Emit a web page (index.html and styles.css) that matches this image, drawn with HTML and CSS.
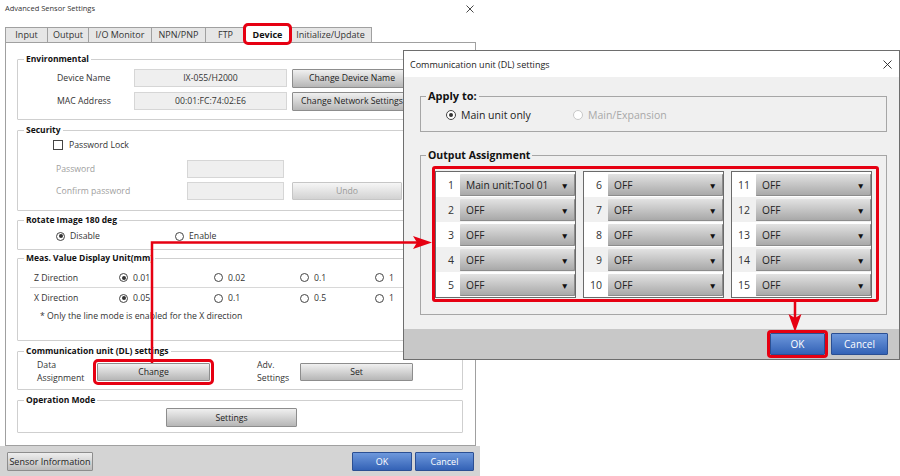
FILE: index.html
```html
<!DOCTYPE html>
<html lang="en">
<head>
  <meta charset="UTF-8">
  <title>Advanced Sensor Settings</title>
  <link rel="stylesheet" href="styles.css">
</head>
<body>
<div class="screen">

  <!-- Main window -->
  <div class="main">
    <div class="titlebar">
      <span>Advanced Sensor Settings</span>
      <svg class="close" width="8" height="8" viewBox="0 0 8 8"><path d="M0.5 0.5L7.5 7.5M7.5 0.5L0.5 7.5" stroke="#333" stroke-width="0.9"/></svg>
    </div>

    <div class="tabs">
      <div class="tab w-input">Input</div>
      <div class="tab w-output">Output</div>
      <div class="tab w-io">I/O Monitor</div>
      <div class="tab w-npn">NPN/PNP</div>
      <div class="tab w-ftp">FTP</div>
      <div class="tab w-device active hl">Device</div>
      <div class="tab w-init">Initialize/Update</div>
    </div>

    <div class="panel">
      <!-- Environmental -->
      <fieldset class="group">
        <legend>Environmental</legend>
        <div class="gbody env">
          <div class="row">
            <span class="lbl">Device Name</span>
            <span class="field">IX-055/H2000</span>
            <span class="btn wide">Change Device Name</span>
          </div>
          <div class="row">
            <span class="lbl">MAC Address</span>
            <span class="field">00:01:FC:74:02:E6</span>
            <span class="btn wide">Change Network Settings</span>
          </div>
        </div>
      </fieldset>

      <!-- Security -->
      <fieldset class="group sec-group">
        <legend>Security</legend>
        <div class="gbody sec">
          <div class="row check-row">
            <span class="check"></span>
            <span>Password Lock</span>
          </div>
          <div class="row pw-row">
            <span class="lbl dim">Password</span>
            <span class="field small"></span>
          </div>
          <div class="row pw-row">
            <span class="lbl dim">Confirm password</span>
            <span class="field small"></span>
            <span class="btn undo disabled">Undo</span>
          </div>
        </div>
      </fieldset>

      <!-- Rotate -->
      <fieldset class="group rot-group">
        <legend>Rotate Image 180 deg</legend>
        <div class="gbody rot">
          <div class="opt w119"><span class="radio on"></span>Disable</div>
          <div class="opt"><span class="radio"></span>Enable</div>
        </div>
      </fieldset>

      <!-- Meas. value -->
      <fieldset class="group meas-group">
        <legend>Meas. Value Display Unit(mm)</legend>
        <div class="gbody meas">
          <div class="mrow first">
            <span>Z Direction</span>
            <div class="opt"><span class="radio on"></span>0.01</div>
            <div class="opt"><span class="radio"></span>0.02</div>
            <div class="opt"><span class="radio"></span>0.1</div>
            <div class="opt"><span class="radio"></span>1</div>
          </div>
          <div class="mrow">
            <span>X Direction</span>
            <div class="opt"><span class="radio on"></span>0.05</div>
            <div class="opt"><span class="radio"></span>0.1</div>
            <div class="opt"><span class="radio"></span>0.5</div>
            <div class="opt"><span class="radio"></span>1</div>
          </div>
          <div class="note">* Only the line mode is enabled for the X direction</div>
        </div>
      </fieldset>

      <!-- Communication unit -->
      <fieldset class="group comm-group">
        <legend>Communication unit (DL) settings</legend>
        <div class="gbody comm">
          <span class="two-line">Data<br>Assignment</span>
          <span class="btn mid hl2">Change</span>
          <span class="two-line adv">Adv.<br>Settings</span>
          <span class="btn mid">Set</span>
        </div>
      </fieldset>

      <!-- Operation mode -->
      <fieldset class="group op-group">
        <legend>Operation Mode</legend>
        <div class="gbody op">
          <span class="btn settings">Settings</span>
        </div>
      </fieldset>
    </div>

    <div class="footer">
      <span class="btn info">Sensor Information</span>
      <div class="footer-right">
        <span class="btn blue ok-main">OK</span>
        <span class="btn blue cancel-main">Cancel</span>
      </div>
    </div>
  </div>

  <!-- Communication unit dialog -->
  <div class="dialog">
    <div class="dtitle">
      <span>Communication unit (DL) settings</span>
      <svg width="9" height="9" viewBox="0 0 9 9"><path d="M0.5 0.5L8.5 8.5M8.5 0.5L0.5 8.5" stroke="#222" stroke-width="0.9"/></svg>
    </div>
    <div class="dbody">
      <fieldset class="dgroup apply">
        <legend>Apply to:</legend>
        <div class="apply-row">
          <div class="opt big"><span class="radio on"></span>Main unit only</div>
          <div class="opt big dim"><span class="radio off"></span>Main/Expansion</div>
        </div>
      </fieldset>

      <fieldset class="dgroup output">
        <legend>Output Assignment</legend>
        <div class="assign">
          <div class="col">
            <div class="arow"><span class="num">1</span><span class="dd">Main unit:Tool 01<i>&#9660;</i></span></div>
            <div class="arow"><span class="num">2</span><span class="dd">OFF<i>&#9660;</i></span></div>
            <div class="arow"><span class="num">3</span><span class="dd">OFF<i>&#9660;</i></span></div>
            <div class="arow"><span class="num">4</span><span class="dd">OFF<i>&#9660;</i></span></div>
            <div class="arow"><span class="num">5</span><span class="dd">OFF<i>&#9660;</i></span></div>
          </div>
          <div class="col">
            <div class="arow"><span class="num">6</span><span class="dd">OFF<i>&#9660;</i></span></div>
            <div class="arow"><span class="num">7</span><span class="dd">OFF<i>&#9660;</i></span></div>
            <div class="arow"><span class="num">8</span><span class="dd">OFF<i>&#9660;</i></span></div>
            <div class="arow"><span class="num">9</span><span class="dd">OFF<i>&#9660;</i></span></div>
            <div class="arow"><span class="num">10</span><span class="dd">OFF<i>&#9660;</i></span></div>
          </div>
          <div class="col">
            <div class="arow"><span class="num">11</span><span class="dd">OFF<i>&#9660;</i></span></div>
            <div class="arow"><span class="num">12</span><span class="dd">OFF<i>&#9660;</i></span></div>
            <div class="arow"><span class="num">13</span><span class="dd">OFF<i>&#9660;</i></span></div>
            <div class="arow"><span class="num">14</span><span class="dd">OFF<i>&#9660;</i></span></div>
            <div class="arow"><span class="num">15</span><span class="dd">OFF<i>&#9660;</i></span></div>
          </div>
        </div>
      </fieldset>
    </div>
    <div class="dfooter">
      <span class="btn blue dbtn hl3">OK</span>
      <span class="btn blue dbtn cancel">Cancel</span>
    </div>
  </div>

  <!-- Red callout arrows -->
  <svg class="arrows" width="900" height="476" viewBox="0 0 900 476">
    <path d="M152 363 V242.5 H420" fill="none" stroke="#e60012" stroke-width="2.5"/>
    <polygon points="413,236 432,242.5 413,249 417,242.5" fill="#e60012"/>
    <path d="M795 302 V322" fill="none" stroke="#e60012" stroke-width="2.5"/>
    <polygon points="788.5,314 795,332 801.5,314 795,318" fill="#e60012"/>
  </svg>
</div>
</body>
</html>
```

FILE: styles.css
```css
/* Page */
body {
  margin: 0;
  background: #fff;
  font-family: "Open Sans", "Noto Sans", sans-serif;
  color: #222;
}

.screen {
  position: relative;
  width: 900px;
  height: 476px;
  overflow: hidden;
  background: #fff;
}

/* Main window */
.main {
  width: 480px;
  height: 476px;
  display: flex;
  flex-direction: column;
}

.titlebar {
  height: 26px;
  box-sizing: border-box;
  padding: 2px 6px 0 5px;
  display: flex;
  justify-content: space-between;
  font-size: 7.5px;
  line-height: 12px;
  color: #333;
}

.titlebar .close {
  margin-top: 3px;
}

.tabs {
  height: 16px;
  display: flex;
  align-items: flex-end;
  padding-left: 5px;
  position: relative;
  z-index: 2;
}

.tab {
  height: 15px;
  box-sizing: border-box;
  border: 1px solid #a0a0a0;
  border-bottom: none;
  margin-right: -1px;
  background: #e6e6e6;
  font-size: 9px;
  line-height: 14px;
  text-align: center;
  color: #333;
}

.tab.active {
  height: 18px;
  margin-bottom: -1px;
  background: #fff;
  font-weight: bold;
  line-height: 18px;
  color: #111;
  position: relative;
  z-index: 3;
}

.w-input { width: 43px; }
.w-output { width: 42px; }
.w-io { width: 64px; }
.w-npn { width: 55px; }
.w-ftp { width: 41px; }
.w-device { width: 45px; }
.w-init { width: 83px; }

/* Red annotation frames */
.hl {
  outline: 3px solid #e60012;
  outline-offset: -1px;
  border-radius: 3px;
}

.hl2 {
  outline: 3px solid #e60012;
  outline-offset: 1px;
  border-radius: 3px;
}

.hl3 {
  outline: 3px solid #e60012;
  outline-offset: 0;
  border-radius: 3px;
}

.panel {
  height: 404px;
  box-sizing: border-box;
  margin: 0 4px 0 5px;
  border: 1px solid #a0a0a0;
  padding: 10px 12px 0 11px;
  background: #fff;
}

/* Group boxes */
.group {
  margin: 0;
  padding: 0;
  min-width: 0;
  border: 1px solid #cfcfcf;
  border-radius: 1px;
}

.group legend {
  margin-left: 6px;
  padding: 0 2px;
  font-size: 8.5px;
  line-height: 12px;
  font-weight: bold;
  color: #111;
}

.sec-group { margin-top: 4px; }
.rot-group { margin-top: 3px; }
.meas-group { margin-top: 2px; }
.comm-group { margin-top: 4px; }
.op-group { margin-top: 4px; }

.gbody {
  font-size: 8.7px;
  color: #333;
}

.row {
  display: flex;
  align-items: center;
  height: 18px;
}

.env {
  padding: 4px 0 9px 39px;
  display: flex;
  flex-direction: column;
  gap: 5px;
}

.env .lbl {
  width: 77px;
}

.field {
  width: 153px;
  height: 18px;
  box-sizing: border-box;
  border: 1px solid #d6d6d6;
  background: #efefef;
  display: flex;
  align-items: center;
  justify-content: center;
  color: #333;
}

.field.small {
  width: 97px;
}

/* Buttons */
.btn {
  box-sizing: border-box;
  display: inline-flex;
  align-items: center;
  justify-content: center;
  border: 1px solid #8d8d8d;
  border-radius: 1px;
  background: linear-gradient(#f0f0f0, #b6b6b6);
  font-size: 8.7px;
  color: #222;
  white-space: nowrap;
}

.btn.wide {
  width: 120px;
  height: 19px;
  margin-left: 5px;
}

.btn.disabled {
  background: linear-gradient(#f6f6f6, #d2d2d2);
  border-color: #c6c6c6;
  color: #9a9a9a;
}

.btn.undo {
  width: 110px;
  height: 18px;
  margin-left: 8px;
}

.btn.blue {
  background: linear-gradient(#6e98dc, #3362b6);
  border-color: #2b4f93;
  color: #fff;
}

/* Security */
.sec {
  padding: 0 0 10px 0;
}

.check-row {
  padding-left: 35px;
  gap: 6px;
}

.check {
  width: 8px;
  height: 8px;
  border: 1px solid #444;
  background: #fff;
}

.pw-row {
  padding-left: 38px;
}

.pw-row + .pw-row {
  margin-top: 4px;
}

.check-row + .pw-row {
  margin-top: 6px;
}

.pw-row .lbl {
  width: 131px;
}

.dim {
  color: #a0a0a0;
}

/* Radio options */
.opt {
  display: flex;
  align-items: center;
  gap: 5px;
}

.radio {
  width: 7px;
  height: 7px;
  border: 1px solid #444;
  border-radius: 50%;
  background: #fff;
  position: relative;
  flex: none;
}

.radio.on::after {
  content: "";
  position: absolute;
  left: 1.5px;
  top: 1.5px;
  width: 4px;
  height: 4px;
  border-radius: 50%;
  background: #333;
}

.rot {
  display: flex;
  align-items: center;
  height: 20px;
  padding: 0 0 3px 38px;
}

.w119 {
  width: 119px;
}

/* Measurement unit */
.meas {
  padding: 4px 0 16px 0;
}

.mrow {
  display: grid;
  grid-template-columns: 85px 95px 86px 75px 1fr;
  align-items: center;
  height: 20px;
  margin: 0 10px 0 12px;
  padding-left: 4px;
}

.mrow.first {
  height: 19px;
  border-bottom: 1px solid #d8d8d8;
}

.note {
  height: 16px;
  line-height: 16px;
  padding-left: 22px;
}

/* Communication unit */
.comm {
  display: flex;
  align-items: center;
  padding: 2px 0 4px 19px;
}

.two-line {
  width: 60px;
  line-height: 13px;
}

.two-line.adv {
  width: 43px;
  margin-left: 47px;
}

.btn.mid {
  width: 113px;
  height: 18px;
}

.op {
  padding: 2px 0 5px 148px;
}

.btn.settings {
  width: 131px;
  height: 19px;
}

/* Footer of main window */
.footer {
  flex: 1;
  background: #d4d4d4;
  display: flex;
  align-items: center;
  justify-content: space-between;
  padding: 0 6px 0 7px;
}

.btn.info {
  width: 86px;
  height: 19px;
  font-size: 9px;
  background: linear-gradient(#eeeeee, #bcbcbc);
}

.footer-right {
  display: flex;
  gap: 3px;
}

.ok-main {
  width: 60px;
  height: 19px;
  font-size: 9px;
}

.cancel-main {
  width: 59px;
  height: 19px;
  font-size: 9px;
}

/* Dialog */
.dialog {
  position: absolute;
  left: 403px;
  top: 50px;
  width: 497px;
  height: 310px;
  box-sizing: border-box;
  border: 1px solid #6e6e6e;
  background: #f0f0f0;
  display: flex;
  flex-direction: column;
  z-index: 5;
}

.dtitle {
  height: 26px;
  flex: none;
  background: #fff;
  display: flex;
  align-items: center;
  justify-content: space-between;
  padding: 0 7px 0 6px;
  font-size: 9px;
  color: #222;
}

.dbody {
  flex: 1;
  padding: 12px 12px 0 16px;
}

.dgroup {
  margin: 0;
  padding: 0;
  min-width: 0;
  border: 1px solid #a6a6a6;
}

.dgroup legend {
  margin-left: 5px;
  padding: 0 2px;
  font-weight: bold;
  color: #111;
}

.apply legend {
  font-size: 11px;
  line-height: 14px;
}

.apply-row {
  display: flex;
  height: 16px;
  padding: 4px 0 8px 25px;
}

.opt.big {
  font-size: 10.5px;
  color: #222;
}

.opt.big:first-child {
  width: 127px;
}

.opt.big .radio {
  width: 8px;
  height: 8px;
}

.opt.big .radio.on::after {
  left: 2px;
  top: 2px;
}

.opt.big.dim {
  color: #a8a8a8;
}

.radio.off {
  border-color: #c8c8c8;
}

.output {
  margin-top: 16px;
}

.output legend {
  font-size: 10.5px;
  line-height: 14px;
}

.assign {
  margin: 4px 7px 12px 11px;
  border: 3px solid #e60012;
  border-radius: 3px;
  padding: 2px 4px 1px 0;
  display: flex;
  gap: 7px;
}

.col {
  flex: 1;
  border: 1px solid #6a6a6a;
  background: #fff;
}

.arow {
  height: 25px;
  display: flex;
  align-items: center;
}

.arow:nth-child(even) {
  background: #f0f0f0;
}

.num {
  width: 24px;
  box-sizing: border-box;
  padding-right: 6px;
  text-align: right;
  font-size: 10.5px;
  color: #333;
}

.dd {
  flex: 1;
  height: 22px;
  box-sizing: border-box;
  display: flex;
  align-items: center;
  justify-content: space-between;
  padding: 1px 6px 0 6px;
  background: linear-gradient(#e2e2e2, #a6a6a6);
  box-shadow: inset -1px -1px 0 #8c8c8c;
  border-radius: 1px;
  font-size: 10.2px;
  color: #222;
}

.dd i {
  font-style: normal;
  font-size: 8.5px;
  color: #111;
}

.dfooter {
  height: 30px;
  flex: none;
  background: #c8c8c8;
  display: flex;
  align-items: center;
  justify-content: flex-end;
  gap: 6px;
  padding-right: 11px;
}

.dbtn {
  width: 55px;
  height: 22px;
  font-size: 10px;
}

.dbtn.cancel {
  width: 57px;
}

/* Overlay arrows */
.arrows {
  position: absolute;
  left: 0;
  top: 0;
  z-index: 10;
  pointer-events: none;
}
```
